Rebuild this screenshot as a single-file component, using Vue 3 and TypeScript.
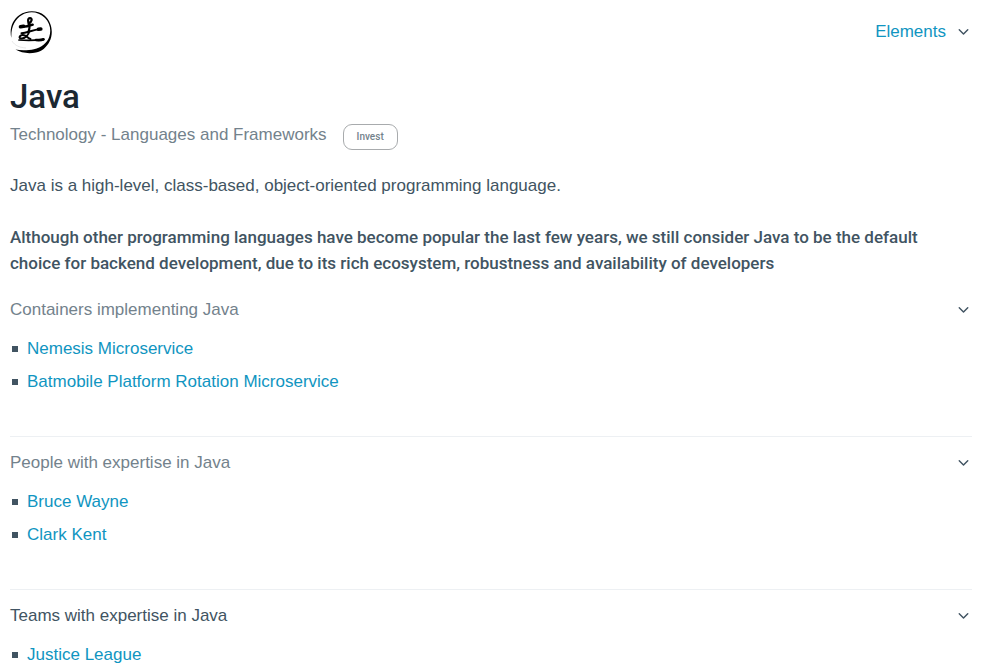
<script setup lang="ts">
import { ref } from 'vue'

interface Section {
  title: string
  active: boolean
  items: string[]
}

const sections: Section[] = [
  {
    title: 'Containers implementing Java',
    active: false,
    items: ['Nemesis Microservice', 'Batmobile Platform Rotation Microservice'],
  },
  {
    title: 'People with expertise in Java',
    active: false,
    items: ['Bruce Wayne', 'Clark Kent'],
  },
  {
    title: 'Teams with expertise in Java',
    active: true,
    items: ['Justice League'],
  },
]

const menuOpen = ref(false)
</script>

<template>
  <div class="page">
    <header class="topbar">
      <a href="#" class="logo" aria-label="Home">
        <svg viewBox="0 0 44 44" width="44" height="44" aria-hidden="true">
          <path d="M1.400 28C-1 19 2.500 9.500 9.500 5C17 -.2 28 .2 34.500 5.500C42.500 12.500 43.500 24 39.500 31.500C36.500 37.500 31.500 41.500 26 42.500C19 44 11 43 5.500 39.600C11 40.500 19 40.300 24 39.200C31.500 37.500 37 33 39.200 27C41.500 20.500 40 13 35 8C28.500 1.500 19 .8 12 5C5 9.200 .8 17 1.400 28Z" fill="#000" />
          <path d="M2 31C5 36 10 37.500 16 38" fill="none" stroke="#d8d8d8" stroke-width=".6" />
          <g fill="none" stroke="#000" stroke-linecap="round" stroke-linejoin="round">
            <path d="M10.500 16.800C14 17.200 18 16.500 22.700 14.700" stroke-width="2.400" />
            <path d="M10.500 16.800L13.500 16.200" stroke-width="3.600" />
            <path d="M18.500 14C22 12 22.700 8.200 20 8.200C17.200 8.200 18 12.500 19.300 15C20 17.500 19 20 18.300 22.500" stroke-width="2.200" />
            <path d="M11.500 23.200C17 22.800 22 20 30.500 19" stroke-width="2" />
            <path d="M28.500 19.300L30.800 19" stroke-width="3.600" />
            <path d="M19 21.500C19 25 14.500 29 11 28.500C8 28 10 24.300 14 25.200C17 26 18 28.500 20.500 29" stroke-width="2" />
            <path d="M9 30C17 30.700 26 30.400 33.500 29.600" stroke-width="1.700" />
            <path d="M26 30C29 30.300 32 30 33.500 29.300" stroke-width="2.700" />
          </g>
        </svg>
      </a>
      <button class="menu" type="button" :aria-expanded="menuOpen" @click="menuOpen = !menuOpen">
        Elements
        <svg class="chevron" viewBox="0 0 24 24" aria-hidden="true"><path d="M6 8l6 6 6-6" /></svg>
      </button>
    </header>

    <main>
      <h1>Java</h1>
      <div class="subtitle">
        <h2>Technology - Languages and Frameworks</h2>
        <button class="tag" type="button">Invest</button>
      </div>
      <p>Java is a high-level, class-based, object-oriented programming language.</p>
      <p class="rationale">
        Although other programming languages have become popular the last few years, we still consider Java to be the
        default choice for backend development, due to its rich ecosystem, robustness and availability of developers
      </p>

      <details v-for="section in sections" :key="section.title" open>
        <summary :class="{ active: section.active }">
          {{ section.title }}
          <svg class="chevron" viewBox="0 0 24 24" aria-hidden="true"><path d="M6 8l6 6 6-6" /></svg>
        </summary>
        <ul>
          <li v-for="item in section.items" :key="item"><a href="#">{{ item }}</a></li>
        </ul>
      </details>
    </main>
  </div>
</template>

<style>
html {
  scrollbar-width: none;
  background: #fff;
}
</style>

<style scoped>
.page {
  padding: 10px 28px 0 10px;
  color: #415462;
  font: 17px/26px "Liberation Sans", Arial, sans-serif;
}

.topbar {
  display: flex;
  align-items: center;
  justify-content: space-between;
}

.logo {
  display: block;
  height: 44px;
}

.logo svg {
  display: block;
}

.menu {
  display: flex;
  align-items: center;
  gap: 9px;
  padding: 0;
  border: 0;
  background: none;
  color: #1095c1;
  font: inherit;
  cursor: pointer;
}

.chevron {
  flex: none;
  width: 17px;
  height: 17px;
  fill: none;
  stroke: #415462;
  stroke-width: 2;
  stroke-linecap: round;
  stroke-linejoin: round;
}

h1 {
  margin: 23px 0 3px;
  color: #1b2832;
  font: 500 33px/40px Roboto, "Liberation Sans", sans-serif;
}

.subtitle {
  display: flex;
  align-items: center;
  gap: 16px;
  margin-bottom: 23px;
}

h2 {
  margin: 0;
  color: #73828c;
  font: inherit;
}

.tag {
  height: 26px;
  margin-top: 4px;
  padding: 0 13px;
  border: 1px solid #a8abad;
  border-radius: 9px;
  background: #fff;
  color: #73828c;
  font: 500 10px/24px Roboto, "Liberation Sans", sans-serif;
}

p {
  margin: 0 0 25px;
}

.rationale {
  margin-bottom: 21px;
  font-family: Roboto, "Liberation Sans", sans-serif;
  font-weight: 500;
}

details {
  margin-bottom: 13px;
  padding-bottom: 25px;
  border-bottom: 1px solid #edf0f3;
}

summary {
  display: flex;
  align-items: center;
  justify-content: space-between;
  margin-bottom: 13px;
  color: #73828c;
  list-style: none;
  cursor: pointer;
}

summary.active {
  color: #415462;
}

ul {
  display: flex;
  flex-direction: column;
  gap: 7px;
  margin: 0;
  padding: 0 0 16px;
  list-style: none;
}

li {
  display: flex;
  align-items: center;
  gap: 9px;
  padding-left: 2px;
}

li::before {
  width: 6px;
  height: 6px;
  background: #415462;
  content: "";
}

a {
  color: #1095c1;
  text-decoration: none;
}
</style>
